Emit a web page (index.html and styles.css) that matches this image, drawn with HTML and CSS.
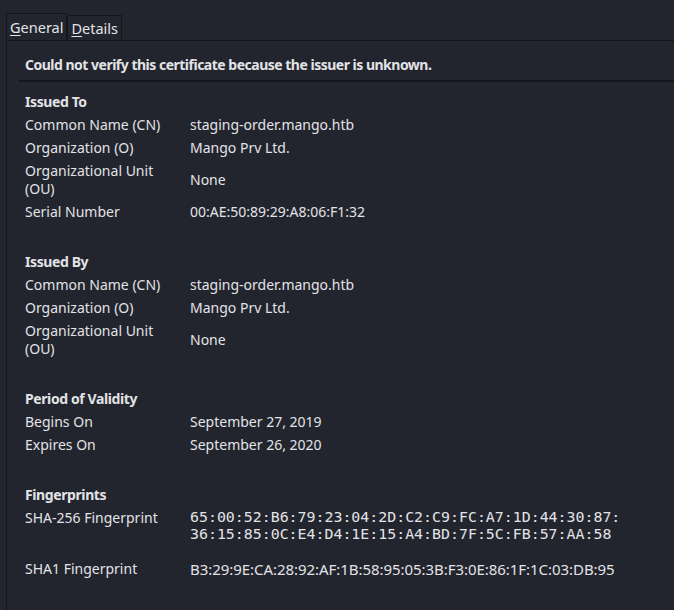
FILE: index.html
```html
<!DOCTYPE html>
<html>
<head>
<meta charset="utf-8">
<link rel="stylesheet" href="styles.css">
</head>
<body>
<div class="tabs">
  <div class="tab active"><span class="mn">G</span>eneral</div>
  <div class="tab"><span class="mn">D</span>etails</div>
</div>
<div class="panel">
  <div class="notice"><span>Could not verify this certificate because the issuer is unknown.</span></div>
  <div class="content">
    <section class="group">
      <div class="heading">Issued To</div>
      <div class="row"><div class="label">Common Name (CN)</div><div class="value">staging-order.mango.htb</div></div>
      <div class="row"><div class="label">Organization (O)</div><div class="value">Mango Prv Ltd.</div></div>
      <div class="row"><div class="label">Organizational Unit<br>(OU)</div><div class="value">None</div></div>
      <div class="row"><div class="label">Serial Number</div><div class="value">00:AE:50:89:29:A8:06:F1:32</div></div>
    </section>
    <section class="group">
      <div class="heading">Issued By</div>
      <div class="row"><div class="label">Common Name (CN)</div><div class="value">staging-order.mango.htb</div></div>
      <div class="row"><div class="label">Organization (O)</div><div class="value">Mango Prv Ltd.</div></div>
      <div class="row"><div class="label">Organizational Unit<br>(OU)</div><div class="value">None</div></div>
    </section>
    <section class="group">
      <div class="heading">Period of Validity</div>
      <div class="row"><div class="label">Begins On</div><div class="value">September 27, 2019</div></div>
      <div class="row"><div class="label">Expires On</div><div class="value">September 26, 2020</div></div>
    </section>
    <section class="group">
      <div class="heading">Fingerprints</div>
      <div class="row top fp"><div class="label">SHA-256 Fingerprint</div><div class="value mono">65:00:52:B6:79:23:04:2D:C2:C9:FC:A7:1D:44:30:87:<br>36:15:85:0C:E4:D4:1E:15:A4:BD:7F:5C:FB:57:AA:58</div></div>
      <div class="row"><div class="label">SHA1 Fingerprint</div><div class="value sha1">B3:29:9E:CA:28:92:AF:1B:58:95:05:3B:F3:0E:86:1F:1C:03:DB:95</div></div>
    </section>
  </div>
</div>
</body>
</html>
```
FILE: styles.css
```css
html, body {
  margin: 0;
  padding: 0;
  height: 100%;
}
body {
  background: #23252e;
  color: #e2e3e6;
  font-family: "Noto Sans", "DejaVu Sans", sans-serif;
  font-size: 14px;
  overflow: hidden;
  display: flex;
  flex-direction: column;
}
.tabs {
  display: flex;
  align-items: flex-end;
  padding: 13px 0 0 6px;
}
.tab {
  border: 1px solid #15161c;
  border-bottom: none;
  height: 26px;
  line-height: 26px;
  padding: 0 3px;
  font-size: 14.5px;
}
.tab:not(.active) {
  height: 24px;
  line-height: 24px;
}
.mn {
  text-decoration: underline;
  text-underline-offset: 2px;
}
.panel {
  flex: 1;
  min-height: 0;
  border-top: 1px solid #15161c;
  border-left: 1px solid #15161c;
  margin-left: 6px;
}
.notice {
  margin-left: 12px;
  height: 41px;
  box-sizing: border-box;
  padding: 7px 0 0 6px;
  border-bottom: 2px solid #15161c;
  display: flex;
  align-items: center;
  font-weight: bold;
  letter-spacing: -0.5px;
}
.content {
  padding: 8px 0 0 18px;
}
.group + .group {
  margin-top: 27px;
}
.heading {
  font-weight: bold;
  letter-spacing: -0.4px;
  line-height: 18px;
  padding: 2.5px 0;
}
.row {
  display: grid;
  grid-template-columns: 165px 1fr;
  align-items: center;
  line-height: 18px;
  padding: 2.5px 0;
}
.row.top {
  align-items: start;
}
.row.fp {
  padding-bottom: 15px;
}
.mono {
  font-family: "DejaVu Sans Mono", monospace;
  font-size: 14.9px;
  line-height: 17px;
}
.sha1 {
  font-size: 15px;
  letter-spacing: -0.05px;
}
```
